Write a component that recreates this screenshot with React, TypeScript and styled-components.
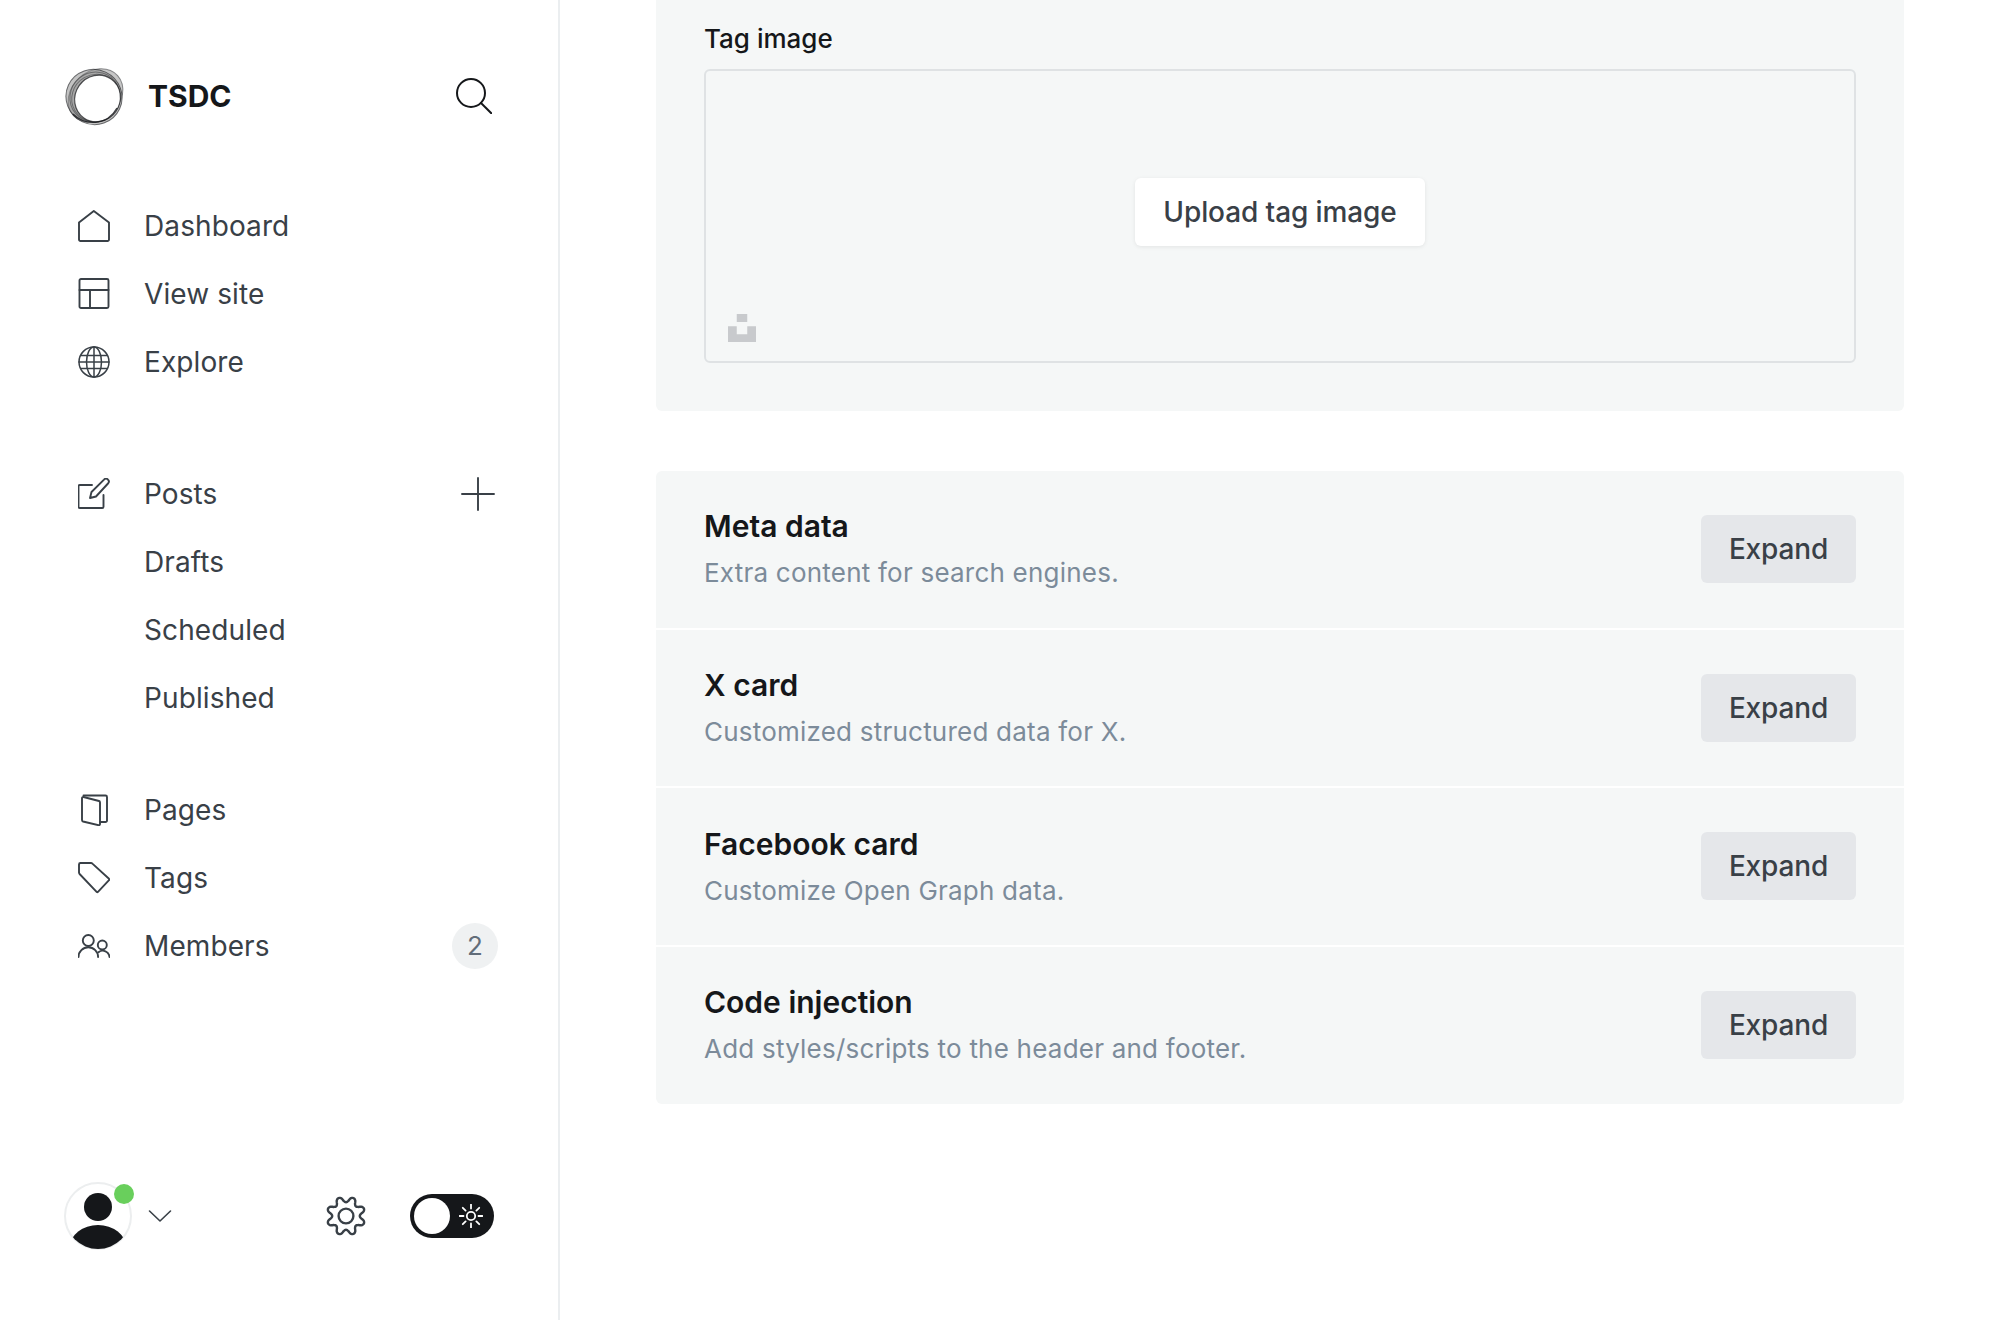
import React from 'react';
import styled, { createGlobalStyle } from 'styled-components';

const GlobalStyle = createGlobalStyle`
html, body {
  margin: 0;
  height: 100%;
  background: #fff;
  overflow: hidden;
  font-family: Inter, "Noto Sans", sans-serif;
}
* { box-sizing: border-box; }
`;

const Shell = styled.div`
display: flex;
width: 2000px;
height: 1320px;
`;

const Sidebar = styled.aside`
display: flex;
flex-direction: column;
flex: 0 0 560px;
height: 100%;
padding: 66px 60px 70px 64px;
border-right: 2px solid #ebeef0;
`;

const Brand = styled.div`
display: flex;
align-items: center;
height: 60px;
margin: 0 0 65px 1px;
`;

const BrandName = styled.span`
margin-left: 23px;
font-size: 30px;
font-weight: 700;
color: #15171a;
`;

const SearchButton = styled.span`
display: flex;
margin-left: auto;
margin-right: 6px;
`;

const NavList = styled.nav<{ $gap: number }>`
display: flex;
flex-direction: column;
margin-bottom: ${p => p.$gap}px;
`;

const NavItem = styled.a`
display: flex;
align-items: center;
height: 68px;
padding-top: 1px;
padding-left: 14px;
color: #394047;
font-size: 28px;
font-weight: 400;
letter-spacing: 0.1px;
`;

const NavIcon = styled.span`
display: flex;
justify-content: center;
flex: 0 0 32px;
margin-right: 34px;
`;

const SubItem = styled(NavItem)`
padding-left: 80px;
`;

const AddButton = styled.span`
display: flex;
margin-left: auto;
margin-right: 3px;
`;

const Badge = styled.span`
display: flex;
align-items: center;
justify-content: center;
width: 46px;
height: 46px;
margin-left: auto;
border-radius: 50%;
background: #eff1f2;
color: #626d79;
font-size: 26px;
`;

const Footer = styled.div`
display: flex;
align-items: center;
margin-top: auto;
padding-right: 4px;
`;

const AvatarWrap = styled.div`
position: relative;
display: flex;
width: 68px;
height: 68px;
`;

const OnlineDot = styled.span`
position: absolute;
top: 2px;
right: -2px;
width: 20px;
height: 20px;
border-radius: 50%;
background: #69cf5c;
`;

const Chevron = styled.span`
display: flex;
margin-left: 16px;
margin-right: auto;
`;

const Toggle = styled.div`
display: flex;
align-items: center;
width: 84px;
height: 44px;
margin-left: 44px;
padding: 0 4px;
border-radius: 22px;
background: #15171a;
`;

const Knob = styled.span`
width: 36px;
height: 36px;
margin-right: 9px;
border-radius: 50%;
background: #fff;
`;

const Main = styled.main`
flex: 1;
padding: 0 96px;
`;

const Panel = styled.section`
background: #f5f7f7;
border-radius: 0 0 6px 6px;
padding: 22px 48px 48px;
`;

const FieldLabel = styled.label`
display: block;
margin-bottom: 13px;
color: #15171a;
font-size: 26px;
font-weight: 500;
line-height: 34px;
`;

const Dropzone = styled.div`
position: relative;
display: flex;
align-items: center;
justify-content: center;
height: 294px;
border: 2px solid #dfe2e4;
border-radius: 6px;
`;

const UploadButton = styled.button`
height: 68px;
margin-bottom: 8px;
padding: 0 28px;
border: 0;
border-radius: 6px;
background: #fff;
box-shadow: 0 1px 4px rgba(0, 0, 0, 0.08);
color: #394047;
font-family: inherit;
font-size: 28px;
font-weight: 500;
letter-spacing: -0.1px;
`;

const UnsplashMark = styled.svg`
position: absolute;
left: 22px;
bottom: 19px;
`;

const CardGroup = styled.section`
display: flex;
flex-direction: column;
gap: 2px;
margin-top: 60px;
border-radius: 6px;
overflow: hidden;
`;

const Card = styled.div`
display: flex;
align-items: center;
justify-content: space-between;
height: 156.7px;
padding: 0 48px;
background: #f5f7f7;
`;

const CardTitle = styled.h4`
margin: 0 0 12px;
color: #15171a;
font-size: 30px;
font-weight: 600;
line-height: 36px;
`;

const CardDesc = styled.p`
margin: 0;
color: #7c8b9a;
font-size: 26px;
font-weight: 400;
line-height: 34px;
letter-spacing: 0.22px;
`;

const ExpandButton = styled.button`
width: 155px;
height: 68px;
margin-bottom: 1px;
border: 0;
border-radius: 6px;
background: #e5e7ea;
color: #394047;
font-family: inherit;
font-size: 28px;
font-weight: 500;
letter-spacing: -0.15px;
`;

const stroke = {
  fill: 'none',
  stroke: 'currentColor',
  strokeWidth: 1.9,
  strokeLinecap: 'round' as const,
  strokeLinejoin: 'round' as const,
};

const Logo = () => (
  <svg width="60" height="60" viewBox="0 0 60 60">
    <ellipse cx="30.5" cy="29.5" rx="29.8" ry="24" transform="rotate(-42 30.5 29.5)" fill="#999" fillOpacity="0.55" stroke="#15171a" strokeOpacity="0.45" />
    <ellipse cx="29" cy="31" rx="28.2" ry="27.4" transform="rotate(25 29 31)" fill="#888" fillOpacity="0.5" stroke="#15171a" strokeOpacity="0.6" />
    <ellipse cx="30" cy="31" rx="25.5" ry="24.5" transform="rotate(-40 30 31)" fill="none" stroke="#15171a" strokeOpacity="0.4" />
    <ellipse cx="31" cy="32" rx="24.5" ry="23.5" transform="rotate(-30 31 32)" fill="none" stroke="#15171a" strokeOpacity="0.4" />
    <ellipse cx="32.5" cy="32.5" rx="23.8" ry="22.4" transform="rotate(-55 32.5 32.5)" fill="#fff" stroke="#15171a" strokeOpacity="0.7" strokeWidth="1.2" />
    <path d="M8 48c12 12 34 12 44-6" fill="none" stroke="#15171a" strokeOpacity="0.8" strokeWidth="1.3" />
  </svg>
);

const SearchIcon = () => (
  <svg width="36" height="36" viewBox="0 0 36 36" {...stroke} stroke="#15171a" strokeWidth={2}>
    <circle cx="15" cy="15" r="14" />
    <path d="M25 25l10.5 10.5" />
  </svg>
);

const HomeIcon = () => (
  <svg width="32" height="32" viewBox="0 0 32 32" {...stroke}>
    <path d="M1 12.5L15.8 1 31 12.5V29.5a1.5 1.5 0 0 1-1.5 1.5h-27A1.5 1.5 0 0 1 1 29.5z" />
  </svg>
);

const LayoutIcon = () => (
  <svg width="32" height="32" viewBox="0 0 32 32" {...stroke}>
    <rect x="1.5" y="1" width="29" height="29" rx="1.5" />
    <path d="M1.5 12h29M12 12v18" />
  </svg>
);

const GlobeIcon = () => (
  <svg width="32" height="32" viewBox="0 0 32 32" {...stroke} strokeWidth={1.5}>
    <circle cx="16" cy="16" r="15" />
    <ellipse cx="16" cy="16" rx="7.5" ry="15" />
    <path d="M16 1v30M3 9.5h26M1 16h30M3 22.5h26" />
  </svg>
);

const PostIcon = () => (
  <svg width="32" height="32" viewBox="0 0 32 32" {...stroke}>
    <path d="M14 7H1.8A1.3 1.3 0 0 0 .5 8.3v20.4A1.3 1.3 0 0 0 1.8 30h22.4a1.3 1.3 0 0 0 1.3-1.3V17" />
    <path d="M12 20l1.5-6L26 1.6a2.6 2.6 0 0 1 4 0 2.8 2.8 0 0 1 0 3.9L18 18.5z" />
  </svg>
);

const PlusIcon = () => (
  <svg width="34" height="34" viewBox="0 0 34 34" {...stroke}>
    <path d="M17 1v32M1 17h32" />
  </svg>
);

const PagesIcon = () => (
  <svg width="32" height="32" viewBox="0 0 32 32" {...stroke}>
    <path d="M5.5 1.5h22a1.5 1.5 0 0 1 1.5 1.5v23.5a1.5 1.5 0 0 1-1.5 1.5H22" />
    <path d="M4 4.2a1.2 1.2 0 0 1 1.5-1.2l15.5 4a1.5 1.5 0 0 1 1 1.4V30a1.2 1.2 0 0 1-1.5 1.2L5 27.5a1.5 1.5 0 0 1-1-1.4z" />
  </svg>
);

const TagIcon = () => (
  <svg width="32" height="32" viewBox="0 0 32 32" {...stroke}>
    <path d="M2.5 1h10.5a2 2 0 0 1 1.4.6L31 16.8a1 1 0 0 1 0 1.4L20 29.8a1 1 0 0 1-1.4 0L1.6 12a2 2 0 0 1-.6-1.4V2.5A1.5 1.5 0 0 1 2.5 1z" />
  </svg>
);

const MembersIcon = () => (
  <svg width="32" height="24" viewBox="0 0 32 24" {...stroke}>
    <circle cx="10.3" cy="6.5" r="5.5" />
    <path d="M.5 23a9.8 9.8 0 0 1 19.6 0" />
    <circle cx="24.3" cy="11" r="4.5" />
    <path d="M20.5 18.2a6.8 6.8 0 0 1 11 4.8" />
  </svg>
);

const AvatarIcon = () => (
  <svg width="68" height="68" viewBox="0 0 68 68">
    <defs>
      <clipPath id="avatar-clip">
        <circle cx="34" cy="34" r="33" />
      </clipPath>
    </defs>
    <circle cx="34" cy="34" r="33" fill="#fff" stroke="#eceeef" strokeWidth="2" />
    <circle cx="34" cy="25" r="14" fill="#15171a" />
    <ellipse cx="34" cy="65" rx="28" ry="22" fill="#15171a" clipPath="url(#avatar-clip)" />
  </svg>
);

const ChevronIcon = () => (
  <svg width="24" height="14" viewBox="0 0 24 14" {...stroke} stroke="#394047" strokeWidth={1.6}>
    <path d="M1.5 2L12 12 22.5 2" />
  </svg>
);

// wavy outline, eight teeth, a valley at the very top
const gearPath = () => {
  const points: string[] = [];
  for (let i = 0; i <= 160; i++) {
    const a = (i / 160) * Math.PI * 2;
    const c = -Math.cos(8 * a);
    const r = 16.6 + 2.8 * Math.sign(c) * Math.pow(Math.abs(c), 0.7);
    const x = 20 + r * Math.sin(a);
    const y = 20 - r * Math.cos(a);
    points.push(`${x.toFixed(2)} ${y.toFixed(2)}`);
  }
  return `M${points.join('L')}Z`;
};

const GearIcon = () => (
  <svg width="40" height="40" viewBox="0 0 40 40" fill="none" stroke="#394047" strokeWidth="2.4">
    <path d={gearPath()} />
    <circle cx="20" cy="20" r="7.4" />
  </svg>
);

const SunIcon = () => (
  <svg width="24" height="24" viewBox="0 0 24 24" fill="none" stroke="#fff" strokeWidth="1.8" strokeLinecap="round">
    <circle cx="12" cy="12" r="4.2" />
    <path d="M12 .5v4M12 19.5v4M.5 12h4M19.5 12h4M3.8 3.8l2.8 2.8M17.4 17.4l2.8 2.8M3.8 20.2l2.8-2.8M17.4 6.6l2.8-2.8" />
  </svg>
);

const cards = [
  { title: 'Meta data', desc: 'Extra content for search engines.' },
  { title: 'X card', desc: 'Customized structured data for X.' },
  { title: 'Facebook card', desc: 'Customize Open Graph data.' },
  { title: 'Code injection', desc: 'Add styles/scripts to the header and footer.' },
];

const App = () => (
  <Shell>
    <GlobalStyle />
    <Sidebar>
      <Brand>
        <Logo />
        <BrandName>TSDC</BrandName>
        <SearchButton><SearchIcon /></SearchButton>
      </Brand>
      <NavList $gap={64}>
        <NavItem><NavIcon><HomeIcon /></NavIcon>Dashboard</NavItem>
        <NavItem><NavIcon><LayoutIcon /></NavIcon>View site</NavItem>
        <NavItem><NavIcon><GlobeIcon /></NavIcon>Explore</NavItem>
      </NavList>
      <NavList $gap={44}>
        <NavItem>
          <NavIcon><PostIcon /></NavIcon>Posts
          <AddButton><PlusIcon /></AddButton>
        </NavItem>
        <SubItem>Drafts</SubItem>
        <SubItem>Scheduled</SubItem>
        <SubItem>Published</SubItem>
      </NavList>
      <NavList $gap={0}>
        <NavItem><NavIcon><PagesIcon /></NavIcon>Pages</NavItem>
        <NavItem><NavIcon><TagIcon /></NavIcon>Tags</NavItem>
        <NavItem>
          <NavIcon><MembersIcon /></NavIcon>Members
          <Badge>2</Badge>
        </NavItem>
      </NavList>
      <Footer>
        <AvatarWrap>
          <AvatarIcon />
          <OnlineDot />
        </AvatarWrap>
        <Chevron><ChevronIcon /></Chevron>
        <GearIcon />
        <Toggle>
          <Knob />
          <SunIcon />
        </Toggle>
      </Footer>
    </Sidebar>
    <Main>
      <Panel>
        <FieldLabel>Tag image</FieldLabel>
        <Dropzone>
          <UploadButton>Upload tag image</UploadButton>
          <UnsplashMark width="28" height="28" viewBox="0 0 32 32" fill="#c8cacd">
            <path d="M10 9V0h12v9H10zm12 5h10v18H0V14h10v9h12v-9z" />
          </UnsplashMark>
        </Dropzone>
      </Panel>
      <CardGroup>
        {cards.map(card => (
          <Card key={card.title}>
            <div>
              <CardTitle>{card.title}</CardTitle>
              <CardDesc>{card.desc}</CardDesc>
            </div>
            <ExpandButton>Expand</ExpandButton>
          </Card>
        ))}
      </CardGroup>
    </Main>
  </Shell>
);

export default App;
